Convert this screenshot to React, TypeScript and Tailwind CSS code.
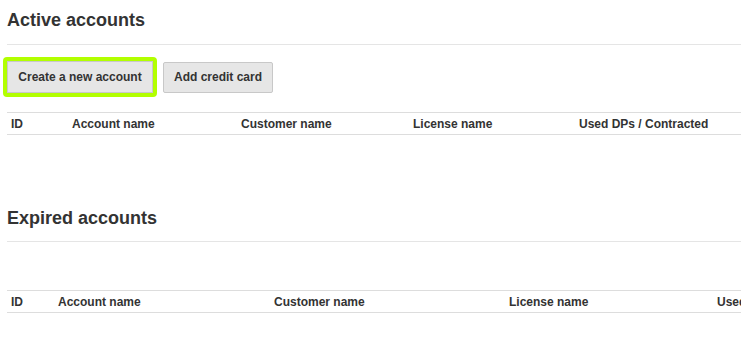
const ACTIVE_COLS = [
  { label: 'ID', w: 'w-[61px]' },
  { label: 'Account name', w: 'w-[169px]' },
  { label: 'Customer name', w: 'w-[172px]' },
  { label: 'License name', w: 'w-[166px]' },
  { label: 'Used DPs / Contracted', w: 'w-[166px]' },
]

const EXPIRED_COLS = [
  { label: 'ID', w: 'w-[47px]' },
  { label: 'Account name', w: 'w-[216px]' },
  { label: 'Customer name', w: 'w-[235px]' },
  { label: 'License name', w: 'w-[208px]' },
  { label: 'Used DPs / Contracted', w: 'w-[166px]' },
]

function AccountsTable({ cols, width }: { cols: { label: string; w: string }[]; width: string }) {
  return (
    <table className={`table-fixed border-collapse ${width}`}>
      <thead>
        <tr className="border-y border-[#dddddd]">
          {cols.map((c) => (
            <th
              key={c.label}
              className={`${c.w} h-[22px] px-[4px] text-left text-[12px] leading-[14px] font-bold text-[#333] whitespace-nowrap`}
            >
              {c.label}
            </th>
          ))}
        </tr>
      </thead>
      <tbody />
    </table>
  )
}

export default function App() {
  return (
    <div
      className="w-[741px] h-[344px] overflow-hidden bg-white pl-[7px]"
      style={{ fontFamily: '"Liberation Sans", Arial, sans-serif' }}
    >
      <h2 className="pt-[10px] text-[18px] leading-[20px] font-bold text-[#333]">Active accounts</h2>
      <div className="mt-[14px] h-px bg-[#e5e5e5] w-[800px]" />

      <div className="mt-[12px] flex items-center gap-[6px] h-[40px]">
        <div className="p-[4px] -ml-[4px] rounded-[4px] bg-[#b2ff00]">
          <button className="block h-[32px] w-[146px] border border-[#c8c8c8] bg-[#e6e6e6] text-[12px] font-bold text-[#333]">
            Create a new account
          </button>
        </div>
        <button className="block h-[31px] w-[110px] border border-[#c8c8c8] rounded-[2px] bg-[#e6e6e6] text-[12px] font-bold text-[#333]">
          Add credit card
        </button>
      </div>

      <div className="mt-[15px]">
        <AccountsTable cols={ACTIVE_COLS} width="w-[734px]" />
      </div>

      <h2 className="mt-[73px] text-[18px] leading-[20px] font-bold text-[#333]">Expired accounts</h2>
      <div className="mt-[13px] h-px bg-[#e5e5e5] w-[800px]" />

      <div className="mt-[48px]">
        <AccountsTable cols={EXPIRED_COLS} width="w-[842px]" />
      </div>
    </div>
  )
}
